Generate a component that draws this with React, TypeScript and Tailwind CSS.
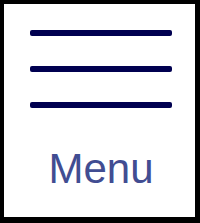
export default function App() {
  return (
    <div className="w-[200px] h-[223px] bg-white">
      <button
        type="button"
        className="w-full h-full flex flex-col items-center bg-white border-black border-t-4 border-l-4 border-r-[5px] border-b-[6px] pt-[26px] pl-[3px]"
      >
        <div className="flex flex-col gap-[30px]">
          <span className="block w-[142px] h-[6px] rounded-[2px] bg-[#000050]" />
          <span className="block w-[142px] h-[6px] rounded-[2px] bg-[#000050]" />
          <span className="block w-[142px] h-[6px] rounded-[2px] bg-[#000050]" />
        </div>
        <span className="mt-10 text-[42px] leading-[42px] text-[#414d92] font-['Liberation_Sans',Arial,sans-serif]">
          Menu
        </span>
      </button>
    </div>
  )
}
